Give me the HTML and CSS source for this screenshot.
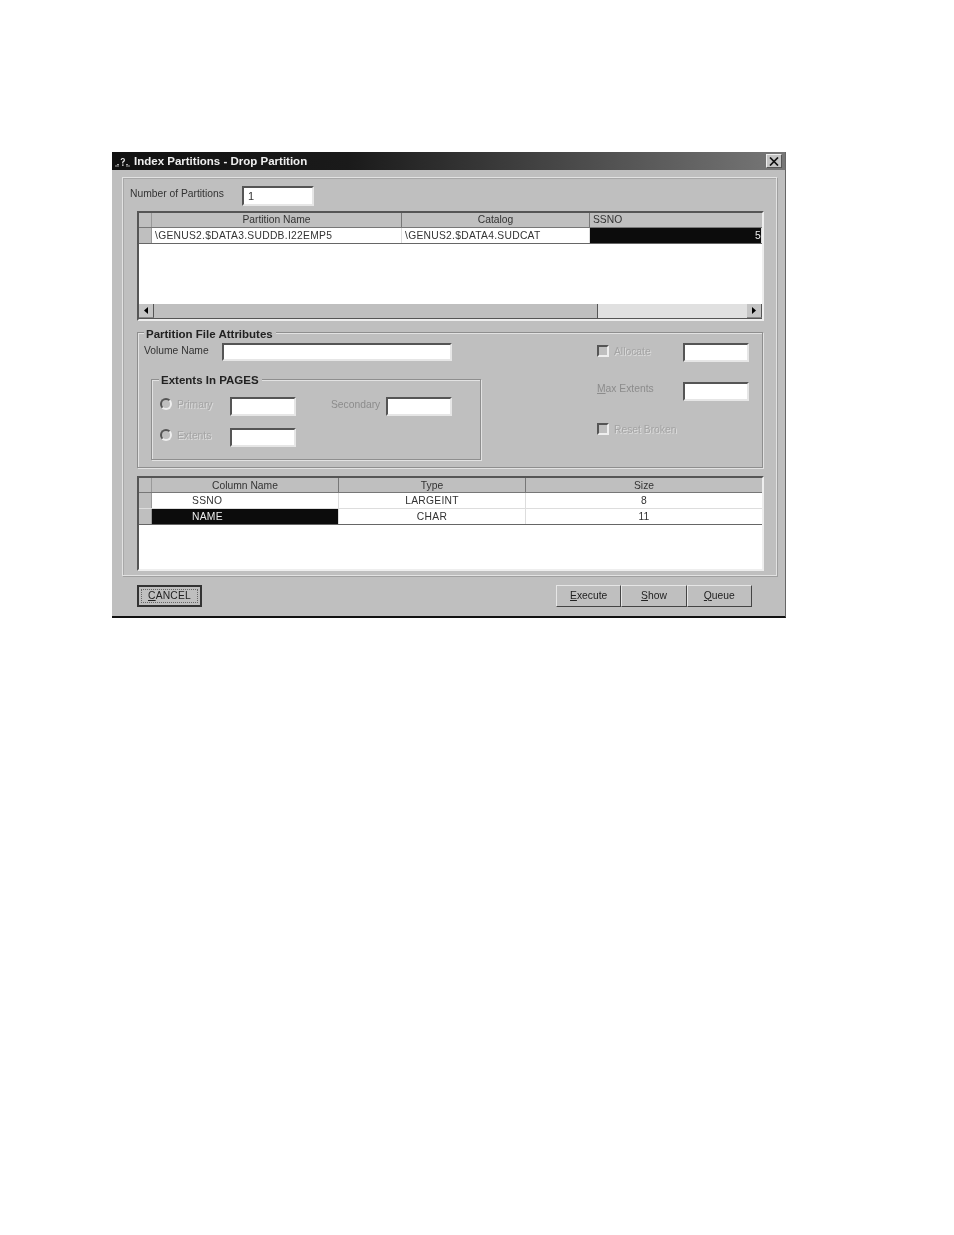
FILE: index.html
```html
<!DOCTYPE html>
<html lang="en">

<head>
    <meta charset="UTF-8">
    <title>Index Partitions - Drop Partition</title>
    <link rel="stylesheet" href="styles.css">
</head>

<body>
    <div class="window">
        <div class="titlebar">
            <svg class="app-icon" width="17" height="14" viewBox="0 0 17 14">
                <path d="M7.200 6 Q7.200 4.500 8.800 4.500 Q10.400 4.500 10.400 6 Q10.400 7.200 8.800 8 L8.800 9.500" fill="none" stroke="#eee" stroke-width="1.200"/>
                <path d="M8 10.500h1.600v1.300h-1.600z" fill="#eee"/>
                <path d="M1 12h4M12 12h4M3 10.500h2M12 10.500h2" stroke="#aaa" stroke-width="1.200"/>
            </svg>
            <span class="title-text">Index Partitions - Drop Partition</span>
            <div class="close-btn">
                <svg width="10" height="9" viewBox="0 0 10 9">
                    <path d="M1 0.500 L9 8.500 M9 0.500 L1 8.500" stroke="#111" stroke-width="1.700"/>
                </svg>
            </div>
        </div>

        <div class="panel">
            <div class="count-row">
                <span class="count-label">Number of Partitions</span>
                <div class="field count-field">1</div>
            </div>

            <div class="grid grid-top">
                <div class="grid-row head-row cols-top">
                    <div class="ind"></div>
                    <div class="cell center">Partition Name</div>
                    <div class="cell center">Catalog</div>
                    <div class="cell last">SSNO</div>
                </div>
                <div class="grid-row data-row line-dark cols-top">
                    <div class="ind"></div>
                    <div class="cell">\GENUS2.$DATA3.SUDDB.I22EMP5</div>
                    <div class="cell">\GENUS2.$DATA4.SUDCAT</div>
                    <div class="cell selected clipped">5</div>
                </div>
                <div class="grid-empty"></div>
                <div class="scrollbar">
                    <div class="scroll-btn">
                        <svg width="4" height="7" viewBox="0 0 4 7"><path d="M4 0v7L0 3.500z" fill="#000"/></svg>
                    </div>
                    <div class="scroll-thumb"></div>
                    <div class="scroll-track"></div>
                    <div class="scroll-btn">
                        <svg width="4" height="7" viewBox="0 0 4 7"><path d="M0 0v7l4-3.500z" fill="#000"/></svg>
                    </div>
                </div>
            </div>

            <div class="group group-attrs">
                <div class="legend legend-attrs">Partition File Attributes</div>
                <div class="attrs-left">
                    <div class="volume-row">
                        <span class="volume-label">Volume Name</span>
                        <div class="field volume-field"></div>
                    </div>
                    <div class="group group-extents">
                        <div class="legend legend-extents">Extents In PAGES</div>
                        <div class="extents-grid">
                            <div class="radio"></div>
                            <span class="off">Primary</span>
                            <div class="field"></div>
                            <span></span>
                            <span class="off-plain">Secondary</span>
                            <div class="field"></div>
                            <div class="radio"></div>
                            <span class="off">Extents</span>
                            <div class="field"></div>
                        </div>
                    </div>
                </div>
                <div class="attrs-right">
                    <div class="check"></div>
                    <span class="off">Allocate</span>
                    <div class="field"></div>
                    <span class="off-plain wide"><u>M</u>ax Extents</span>
                    <div class="field"></div>
                    <div class="check"></div>
                    <span class="off wide">Reset Broken</span>
                </div>
            </div>

            <div class="grid grid-bottom">
                <div class="grid-row head-row cols-bottom">
                    <div class="ind"></div>
                    <div class="cell center">Column Name</div>
                    <div class="cell center">Type</div>
                    <div class="cell center last">Size</div>
                </div>
                <div class="grid-row data-row cols-bottom">
                    <div class="ind"></div>
                    <div class="cell name-cell">SSNO</div>
                    <div class="cell center">LARGEINT</div>
                    <div class="cell center last">8</div>
                </div>
                <div class="grid-row data-row line-dark cols-bottom">
                    <div class="ind"></div>
                    <div class="cell name-cell selected">NAME</div>
                    <div class="cell center">CHAR</div>
                    <div class="cell center last">11</div>
                </div>
                <div class="grid-empty"></div>
            </div>
        </div>

        <div class="button-row">
            <div class="btn btn-default"><span class="focus"><u>C</u>ANCEL</span></div>
            <div class="btn-group">
                <div class="btn"><span><u>E</u>xecute</span></div>
                <div class="btn"><span><u>S</u>how</span></div>
                <div class="btn"><span><u>Q</u>ueue</span></div>
            </div>
        </div>
    </div>
</body>

</html>
```

FILE: styles.css
```css
* {
    box-sizing: border-box;
}

body {
    margin: 0;
    padding: 152px 0 0 112px;
    background-color: #fff;
    font-family: "Liberation Sans", Arial, sans-serif;
    font-size: 10.3px;
    color: #333;
}

.window {
    width: 674px;
    height: 466px;
    background-color: #bfbfbf;
    border-right: 1px solid #666;
    border-bottom: 2px solid #111;
    filter: blur(0.75px);
}

/* title bar */
.titlebar {
    display: flex;
    align-items: center;
    height: 18px;
    padding: 0 3px 0 2px;
    background: linear-gradient(to right, #111 0%, #1a1a1a 35%, #777 100%);
}

.app-icon {
    flex: none;
}

.title-text {
    margin-left: 3px;
    font-size: 11.5px;
    font-weight: bold;
    color: #eee;
}

.close-btn {
    display: flex;
    align-items: center;
    justify-content: center;
    width: 16px;
    height: 14px;
    margin-left: auto;
    background-color: #c4c4c4;
    border: 1px solid;
    border-color: #eee #555 #555 #eee;
}

/* main panel */
.panel {
    width: 655px;
    height: 399px;
    margin: 7px 0 0 10px;
    padding: 8px 0 0 7px;
    border: 1px solid #e2e2e2;
    box-shadow: 1px 1px 0 #a0a0a0, inset 1px 1px 0 #a8a8a8;
}

.count-row {
    display: flex;
    align-items: center;
    height: 20px;
}

.count-label {
    width: 112px;
    padding-bottom: 6px;
}

.field {
    width: 66px;
    height: 19px;
    background-color: #fff;
    border: 2px solid;
    border-color: #555 #e6e6e6 #e6e6e6 #555;
}

.count-field {
    width: 72px;
    height: 20px;
    padding: 2px 0 0 4px;
    font-size: 11px;
}

/* grids */
.grid {
    display: flex;
    flex-direction: column;
    width: 627px;
    margin-left: 7px;
    background-color: #fff;
    border: 2px solid;
    border-color: #555 #eee #eee #555;
}

.grid-top {
    height: 110px;
    margin-top: 5px;
}

.grid-bottom {
    height: 95px;
    margin-top: 8px;
}

.grid-row {
    display: grid;
    flex: none;
}

.cols-top {
    grid-template-columns: 13px 250px 188px 1fr;
}

.cols-bottom {
    grid-template-columns: 13px 187px 187px 1fr;
}

.head-row {
    height: 15px;
    background-color: #bfbfbf;
    border-bottom: 1px solid #777;
}

.head-row .cell {
    line-height: 14px;
    letter-spacing: 0;
    background-color: #bfbfbf;
    border-right: 1px solid #777;
}

.grid-bottom .head-row .cell {
    line-height: 15px;
}

.data-row {
    height: 16px;
    background-color: #fff;
    border-bottom: 1px solid #ddd;
}

.data-row.line-dark {
    border-bottom-color: #666;
}

.ind {
    background-color: #bfbfbf;
    border-right: 1px solid #999;
}

.cell {
    padding-left: 3px;
    overflow: hidden;
    white-space: nowrap;
    line-height: 15px;
    letter-spacing: 0.27px;
    border-right: 1px solid #ddd;
}

.cell.last {
    border-right: 0;
}

.center {
    padding-left: 0;
    text-align: center;
}

.name-cell {
    padding-left: 40px;
}

.selected {
    color: #eee;
    background-color: #0c0c0c;
}

.clipped {
    text-align: right;
    text-indent: 3px;
}

.grid-empty {
    flex: 1;
}

.scrollbar {
    display: flex;
    height: 15px;
    flex: none;
    background-color: #bfbfbf;
    border-bottom: 1px solid #555;
}

.scroll-btn {
    display: flex;
    align-items: center;
    justify-content: center;
    width: 15px;
    background-color: #c4c4c4;
    border-right: 1px solid #555;
    border-bottom: 1px solid #888;
}

.scroll-thumb {
    width: 443px;
    margin-left: 1px;
    border-right: 1px solid #555;
}

.scroll-track {
    flex: 1;
    background-color: #e0e0e0;
}

/* group boxes */
.group {
    position: relative;
    border: 1px solid #8e8e8e;
    box-shadow: inset 1px 1px 0 #e2e2e2, 1px 1px 0 #e2e2e2;
}

.group-attrs {
    display: flex;
    width: 626px;
    height: 136px;
    margin: 11px 0 0 7px;
}

.legend {
    position: absolute;
    padding: 0 3px 0 2px;
    background-color: #bfbfbf;
    font-size: 11.5px;
    font-weight: bold;
    line-height: 12px;
    color: #222;
}

.legend-attrs {
    top: -5px;
    left: 6px;
}

.legend-extents {
    top: -6px;
    left: 7px;
}

.attrs-left {
    width: 459px;
    flex: none;
}

.volume-row {
    display: flex;
    height: 18px;
    margin-top: 10px;
    padding-left: 6px;
}

.volume-label {
    width: 78px;
    padding-top: 2px;
}

.volume-field {
    width: 230px;
    height: 18px;
}

.group-extents {
    width: 330px;
    height: 81px;
    margin: 18px 0 0 13px;
}

.extents-grid {
    display: grid;
    grid-template-columns: 17px 53px 66px 35px 55px 66px;
    grid-auto-rows: 19px;
    row-gap: 12px;
    align-items: center;
    padding: 17px 0 0 8px;
}

.extents-grid .off,
.extents-grid .radio {
    margin-bottom: 5px;
}

.extents-grid .off-plain {
    margin-bottom: 4px;
}

.attrs-right {
    display: grid;
    grid-template-columns: 17px 69px 65px;
    grid-auto-rows: 18px;
    row-gap: 21px;
    align-items: center;
    margin-top: 10px;
    height: 100px;
}

.attrs-right .off,
.attrs-right .check {
    margin-bottom: 2px;
}

.wide {
    grid-column: span 2;
}

.attrs-right .off-plain {
    grid-column: 1 / span 2;
    margin-bottom: 6px;
}

.off {
    color: #a4a4a4;
    text-shadow: 1px 1px 0 #ddd;
}

.off-plain {
    color: #8c8c8c;
}

.radio {
    width: 12px;
    height: 12px;
    background-color: #bfbfbf;
    border: 2px solid;
    border-color: #555 #eee #eee #555;
    border-radius: 50%;
}

.check {
    width: 12px;
    height: 12px;
    background-color: #bfbfbf;
    border: 2px solid;
    border-color: #555 #eee #eee #555;
}

/* buttons */
.button-row {
    display: flex;
    justify-content: space-between;
    height: 22px;
    margin-top: 9px;
    padding: 0 33px 0 25px;
}

.btn-group {
    display: flex;
    width: 196px;
}

.btn {
    display: flex;
    flex: 1;
    align-items: center;
    justify-content: center;
    height: 22px;
    padding-bottom: 2px;
    background-color: #bfbfbf;
    border: 1px solid;
    border-color: #e6e6e6 #444 #444 #e6e6e6;
    color: #222;
}

.btn-default {
    flex: none;
    width: 65px;
    padding: 2px;
    border: 2px solid #333;
}

.focus {
    flex: 1;
    padding: 0 0 1px;
    text-align: center;
    letter-spacing: 0.2px;
    border: 1px dotted #666;
}
```
